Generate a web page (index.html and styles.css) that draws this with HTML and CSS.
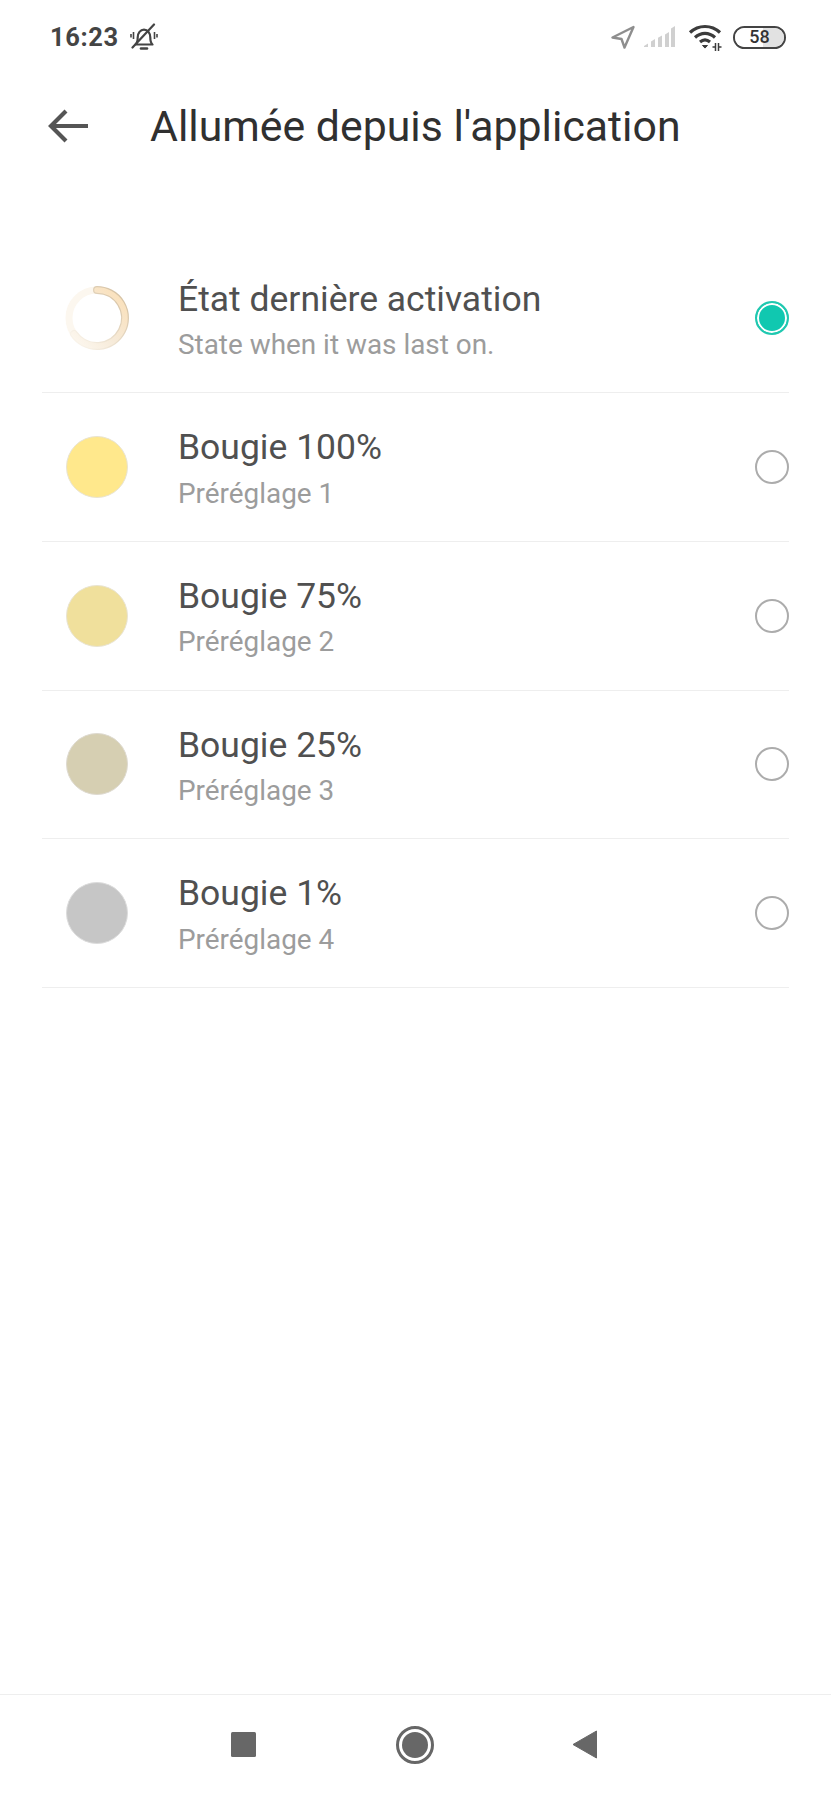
FILE: index.html
```html
<!DOCTYPE html>
<html lang="fr">
<head>
<meta charset="utf-8">
<title>Allumée depuis l'application</title>
<link rel="stylesheet" href="styles.css">
</head>
<body>
<div class="page">
  <div class="status">
    <div class="status-left">
      <span class="time">16:23</span>
      <svg class="bell" viewBox="0 0 28 28" width="28" height="28" fill="none" stroke="#444" stroke-width="2.200">
        <path d="M5.500 21.500c1.800-1.500 2.200-3.200 2.200-7 0-4.600 2.700-7.800 6.300-7.800s6.300 3.200 6.300 7.800c0 3.800.4 5.500 2.200 7z" stroke-linejoin="round"/>
        <path d="M2.500 24.500 24 1.500" stroke-linecap="round"/>
        <path d="M11 25.500h6" stroke-width="2.600" stroke-linecap="round"/>
        <path d="M3.500 9v7M1 11v3.500M24.500 9v7M27 11v3.500" stroke-width="1.600"/>
      </svg>
    </div>
    <div class="status-right">
      <svg class="loc" viewBox="0 0 24 24" width="24" height="24" fill="none" stroke="#8e8e8e" stroke-width="2.400" stroke-linejoin="round"><path d="M22.500 2 1.500 12.500 10.500 14 13.500 22.500z"/></svg>
      <svg class="sig" viewBox="0 0 32 24" width="32" height="24" fill="#d0d0d0"><path d="M1 22h4v-3.500l-4 2.500zM8 22h4v-8l-4 2.500zM15 22h4V10.500l-4 2.300zM22 22h4V7l-4 2.500zM28 22h4V1l-4 2.500z" transform="translate(-1 0)"/></svg>
      <svg class="wifi" viewBox="0 0 36 28" width="36" height="28" fill="none" stroke="#3c3c3c" stroke-width="3.200">
        <path d="M2 9.500C10.500 1.500 23.500 1.500 32 9.500"/>
        <path d="M7 14.500c6-5.500 14-5.500 20 0"/>
        <path d="M12 19c3.200-2.700 6.800-2.700 10 0"/>
        <path d="M14.500 22.500h5l-2.500 2.600z" fill="#3c3c3c" stroke-width="1"/>
        <path d="M27.500 20v8M30.500 20v8" stroke-width="1.500"/>
        <path d="M24.500 24h3M30.500 24h3" stroke-width="1.500"/>
      </svg>
      <div class="battery"><span class="battery-fill"></span><span class="battery-num">58</span></div>
    </div>
  </div>

  <header class="head">
    <svg class="back" viewBox="0 0 40 34" width="40" height="34" fill="none" stroke="#555" stroke-width="4.200"><path d="M40 17H3"/><path d="M18 2 3 17l15 15"/></svg>
    <h1 class="head-title">Allumée depuis l'application</h1>
  </header>

  <ul class="list">
    <li class="row">
      <svg class="ring" viewBox="0 0 66 66" width="66" height="66" fill="none">
        <defs>
          <linearGradient id="fade" x1="1" y1="0" x2="0" y2="1">
            <stop offset="0" stop-color="#fbdfb6"/>
            <stop offset=".55" stop-color="#f6ead8"/>
            <stop offset="1" stop-color="#fdf8f0"/>
          </linearGradient>
          <linearGradient id="edge" x1="1" y1="0" x2="0" y2="1">
            <stop offset="0" stop-color="#d2bd9d"/>
            <stop offset=".6" stop-color="#ece1cf"/>
            <stop offset="1" stop-color="#fbf6ee"/>
          </linearGradient>
        </defs>
        <circle cx="33" cy="33" r="28" stroke="#fcf7ef" stroke-width="7"/>
        <path d="M33 5A28 28 0 1 1 10 49" stroke="url(#edge)" stroke-width="8" stroke-linecap="round"/>
        <path d="M33 5A28 28 0 1 1 10 49" stroke="url(#fade)" stroke-width="5.500" stroke-linecap="round"/>
      </svg>
      <div class="row-text">
        <div class="row-title">État dernière activation</div>
        <div class="row-sub">State when it was last on.</div>
      </div>
      <span class="radio radio-on"></span>
    </li>
    <li class="row">
      <span class="swatch swatch-100"></span>
      <div class="row-text">
        <div class="row-title">Bougie 100%</div>
        <div class="row-sub">Préréglage 1</div>
      </div>
      <span class="radio"></span>
    </li>
    <li class="row">
      <span class="swatch swatch-75"></span>
      <div class="row-text">
        <div class="row-title">Bougie 75%</div>
        <div class="row-sub">Préréglage 2</div>
      </div>
      <span class="radio"></span>
    </li>
    <li class="row">
      <span class="swatch swatch-25"></span>
      <div class="row-text">
        <div class="row-title">Bougie 25%</div>
        <div class="row-sub">Préréglage 3</div>
      </div>
      <span class="radio"></span>
    </li>
    <li class="row">
      <span class="swatch swatch-1"></span>
      <div class="row-text">
        <div class="row-title">Bougie 1%</div>
        <div class="row-sub">Préréglage 4</div>
      </div>
      <span class="radio"></span>
    </li>
  </ul>

  <nav class="nav">
    <span class="nav-square"></span>
    <span class="nav-home"><span class="nav-home-dot"></span></span>
    <svg class="nav-back" viewBox="0 0 25 29" width="25" height="29"><path d="M24.500 1 1 14.500 24.500 28z" fill="#676767" stroke="#676767" stroke-linejoin="round"/></svg>
  </nav>
</div>
</body>
</html>
```

FILE: styles.css
```css
* { box-sizing: border-box; }
html, body { margin: 0; padding: 0; background: #fff; }
body { font-family: Roboto, "Liberation Sans", sans-serif; }
.page { width: 831px; height: 1794px; display: flex; flex-direction: column; background: #fff; overflow: hidden; }

.status { height: 74px; flex: none; display: flex; align-items: center; justify-content: space-between; padding: 0 45px 0 50px; }
.status-left { display: flex; align-items: center; gap: 11px; }
.time { font-size: 25.500px; font-weight: 700; color: #444; letter-spacing: .6px; }
.status-right { display: flex; align-items: center; }
.loc { margin-right: 9px; }
.sig { margin-right: 12px; }
.wifi { margin-right: 10px; }
.battery { position: relative; width: 53px; height: 23px; border: 2.500px solid #444; border-radius: 12px; display: flex; align-items: center; justify-content: center; overflow: hidden; margin-left: -1px; }
.battery-fill { position: absolute; left: 0; top: 0; bottom: 0; width: 100%; background: linear-gradient(to right, #fff 0, #fff 58%, #e2e2e2 58%, #e2e2e2 100%); }
.battery-num { position: relative; font-size: 18px; font-weight: 500; color: #333; line-height: 1; }

.head { height: 102px; flex: none; display: flex; align-items: center; padding-left: 48px; padding-top: 1px; }
.back { flex: none; margin-right: 62px; }
.head-title { margin: 0; font-size: 42.800px; font-weight: 400; color: #303030; white-space: nowrap; }

.list { list-style: none; margin: 68.500px 0 0; padding: 0 42px; flex: none; }
.row { height: 148.700px; display: flex; align-items: center; border-bottom: 1.500px solid #eee; }
.ring { flex: none; margin-left: 22px; margin-right: 48px; }
.swatch { flex: none; width: 62px; height: 62px; border-radius: 50%; margin-left: 24px; margin-right: 50px; border: 1px solid #e9e4d2; }
.swatch-100 { background: #ffe88c; }
.swatch-75 { background: #f0e09c; }
.swatch-25 { background: #d6cfb2; border-color: #dedad0; }
.swatch-1 { background: #c6c6c6; border-color: #dcdcdc; }
.row-text { flex: 1; min-width: 0; padding-top: 4px; }
.row-title { font-size: 35.500px; line-height: 42px; color: #505050; white-space: nowrap; }
.row-sub { font-size: 27.900px; line-height: 36px; color: #9c9c9c; margin-top: 7.500px; white-space: nowrap; }
.radio { flex: none; width: 34px; height: 34px; border-radius: 50%; border: 2px solid #acacac; }
.radio-on { border: 2px solid #20c8b0; background: #10c8b0; box-shadow: inset 0 0 0 2px #fff; }

.nav { margin-top: auto; height: 100px; flex: none; border-top: 1.500px solid #eee; display: flex; align-items: center; padding: 0 0 0 231px; }
.nav-square { width: 25px; height: 25px; background: #676767; border-radius: 1.500px; margin-right: 140px; }
.nav-home { width: 38px; height: 38px; border-radius: 50%; border: 3px solid #676767; display: flex; align-items: center; justify-content: center; margin-right: 138px; }
.nav-home-dot { width: 26px; height: 26px; border-radius: 50%; background: #676767; }
```
